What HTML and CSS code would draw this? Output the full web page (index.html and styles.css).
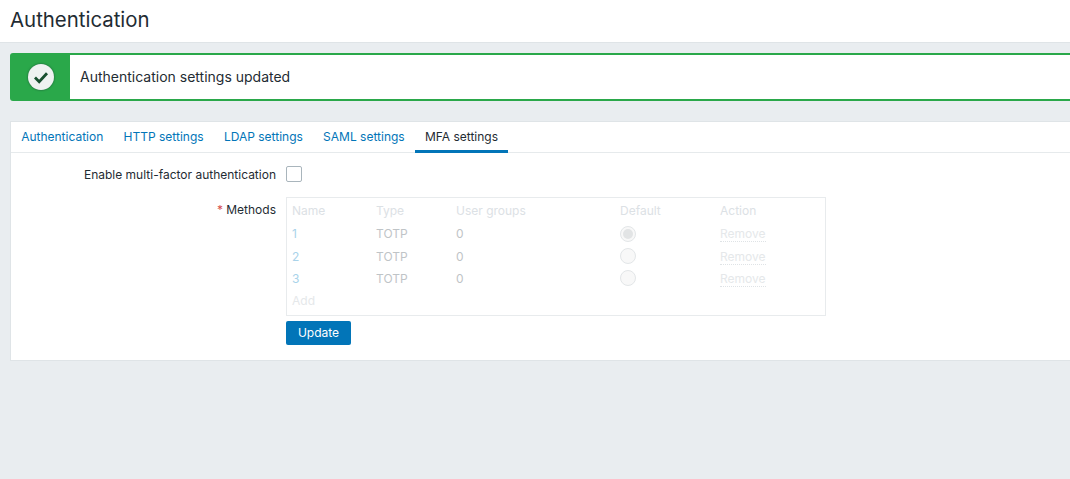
FILE: index.html
```html
<!DOCTYPE html>
<html lang="en">
<head>
<meta charset="utf-8">
<title>Authentication</title>
<link rel="stylesheet" href="styles.css">
</head>
<body>
<header class="page-header"><h1>Authentication</h1></header>
<main class="content">
  <div class="msg">
    <div class="msg-icon">
      <svg width="26" height="26" viewBox="0 0 26 26"><circle cx="13" cy="13" r="13" fill="#eef2f1"/><path d="M7 13.5l4.2 4.2 7.8-8.4" fill="none" stroke="#174f2f" stroke-width="2.8"/></svg>
    </div>
    <div class="msg-text">Authentication settings updated</div>
  </div>
  <section class="panel">
    <nav class="tabs">
      <a class="tab">Authentication</a>
      <a class="tab">HTTP settings</a>
      <a class="tab">LDAP settings</a>
      <a class="tab">SAML settings</a>
      <a class="tab active">MFA settings</a>
    </nav>
    <div class="form">
      <div class="row row-check">
        <label class="lbl">Enable multi-factor authentication</label>
        <div class="ctl"><span class="checkbox"></span></div>
      </div>
      <div class="row row-methods">
        <label class="lbl"><span class="req">*</span> Methods</label>
        <div class="ctl">
          <div class="methods">
            <table>
              <thead><tr><th class="c1">Name</th><th class="c2">Type</th><th class="c3">User groups</th><th class="c4">Default</th><th class="c5">Action</th></tr></thead>
              <tbody>
                <tr><td class="num">1</td><td class="val">TOTP</td><td class="val">0</td><td><span class="radio on"></span></td><td><span class="dotted">Remove</span></td></tr>
                <tr><td class="num">2</td><td class="val">TOTP</td><td class="val">0</td><td><span class="radio"></span></td><td><span class="dotted">Remove</span></td></tr>
                <tr><td class="num">3</td><td class="val">TOTP</td><td class="val">0</td><td><span class="radio"></span></td><td><span class="dotted">Remove</span></td></tr>
                <tr><td colspan="5"><span class="dotted add">Add</span></td></tr>
              </tbody>
            </table>
          </div>
          <button class="btn" type="button">Update</button>
        </div>
      </div>
    </div>
  </section>
</main>
</body>
</html>
```

FILE: styles.css
```css
* { box-sizing: border-box; }
html, body { height: 100%; overflow: hidden; }
body {
  margin: 0;
  background: #e9edf0;
  color: #1f2c33;
  font-family: Inter, "Liberation Sans", sans-serif;
  font-size: 12px;
}
.page-header {
  height: 43px;
  background: #fff;
  border-bottom: 1px solid #dfe4e7;
  padding-left: 10px;
}
h1 {
  margin: 0;
  font-size: 20.4px;
  font-weight: 400;
  line-height: 40px;
}
.content { padding: 10px 0 0 10px; }
.msg {
  display: flex;
  height: 48px;
  margin-right: -10px;
  background: #2aa84a;
  border-radius: 3px 0 0 3px;
  padding: 2px 0;
}
.msg-icon {
  width: 60px;
  padding-left: 2px;
  display: flex;
  align-items: center;
  justify-content: center;
}
.msg-icon svg { filter: drop-shadow(0 0 1px #1c5a37); }
.msg-text {
  flex: 1;
  background: #fff;
  padding-left: 10px;
  font-size: 14px;
  line-height: 44px;
}
.panel {
  margin-top: 20px;
  margin-right: -10px;
  height: 240px;
  background: #fff;
  border: 1px solid #dfe4e7;
  border-right: 0;
}
.tabs {
  display: flex;
  height: 31px;
  border-bottom: 1px solid #e6eaec;
}
.tab {
  height: 31px;
  padding: 0 10.15px;
  color: #0275b8;
  line-height: 30px;
}
.tab.active {
  color: #1f2c33;
  border-bottom: 3px solid #0275b8;
}
.form { padding-top: 13px; }
.row { display: flex; }
.lbl {
  width: 265px;
  text-align: right;
  line-height: 18px;
}
.ctl { margin-left: 10px; }
.row-check { height: 31px; }
.row-methods .lbl { padding-top: 4px; }
.checkbox {
  display: block;
  width: 16px;
  height: 16px;
  border: 1px solid #a9b5bc;
  border-radius: 2px;
  background: #fff;
}
.req { color: #d64e4e; }
.methods {
  width: 540px;
  height: 119px;
  border: 1px solid #e8ebed;
  padding: 1px 5px;
}
table {
  width: 100%;
  border-collapse: collapse;
  table-layout: fixed;
}
th, td {
  padding: 0;
  text-align: left;
  font-weight: 400;
  vertical-align: middle;
}
th { height: 23px; color: #dce1e5; }
td { height: 22px; }
tbody tr:first-child td { height: 23px; }
.c1 { width: 84px; }
.c2 { width: 80px; }
.c3 { width: 164px; }
.c4 { width: 100px; }
.num { color: #a9d3ea; }
.val { color: #bfc4c7; }
.dotted {
  color: #e5e8ea;
  border-bottom: 1px dotted #dfe3e6;
}
.add { border-bottom-color: transparent; }
.radio {
  display: block;
  position: relative;
  width: 16px;
  height: 16px;
  border: 1px solid #e3e6e8;
  border-radius: 50%;
  background: #f8f8f8;
}
.radio.on::after {
  content: "";
  position: absolute;
  left: 2px;
  top: 2px;
  width: 10px;
  height: 10px;
  border-radius: 50%;
  background: #e2e4e5;
}
.btn {
  display: block;
  width: 65px;
  height: 24px;
  margin-top: 5px;
  padding: 0 0 2px;
  border: 0;
  border-radius: 2px;
  background: #0275b8;
  color: #fff;
  font: 12px Inter, "Liberation Sans", sans-serif;
}
```
